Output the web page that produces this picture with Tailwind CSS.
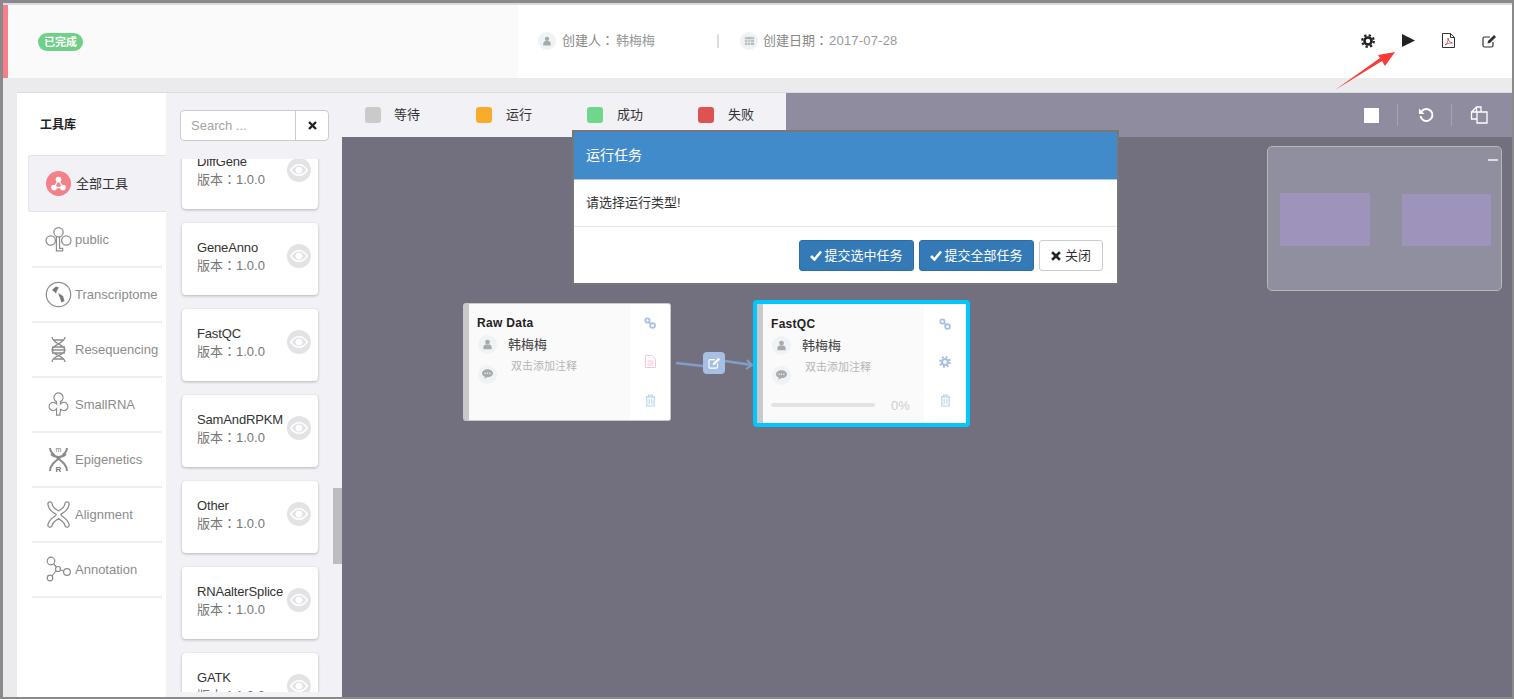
<!DOCTYPE html>
<html lang="en">
<head>
  <meta charset="UTF-8" />
  <title>工作流</title>
  <script src="https://cdn.jsdelivr.net/npm/@tailwindcss/browser@4"></script>
</head>
<body class="relative w-[1514px] h-[699px] overflow-hidden bg-[#8a8a8a] font-['Liberation_Sans','Noto_Sans_CJK_SC',sans-serif] text-[13px] text-[#333]">
  <!-- shared icons -->
  <svg class="hidden">
    <symbol id="user" viewBox="0 0 16 16"><circle cx="8" cy="4.500" r="3.500"/><path d="M2 15v-3c0-2.500 2-4 3.500-4h5c1.500 0 3.500 1.500 3.500 4v3z"/></symbol>
    <symbol id="eye" viewBox="0 0 24 16"><path d="M1 8c3-4.500 7-7 11-7s8 2.500 11 7c-3 4.500-7 7-11 7S4 12.500 1 8z" fill="none" stroke="#fff" stroke-width="2"/><circle cx="12" cy="8" r="4.500" fill="#fff"/></symbol>
    <symbol id="link" viewBox="0 0 14 14" fill="none" stroke-width="2"><circle cx="4" cy="4" r="2.500"/><circle cx="10" cy="10" r="2.800"/><path d="M6 6l2 2"/></symbol>
    <symbol id="trash" viewBox="0 0 12 14" fill="none" stroke-width="1.200"><path d="M1 3h10M4 3V1h4v2M2 3v10h8V3M4.500 5v6M7.500 5v6"/></symbol>
    <symbol id="comment" viewBox="0 0 14 12"><path d="M7 0c3.800 0 7 2.200 7 5s-3.200 5-7 5l-1 0-3 2 .6-2.600C1.400 8.500 0 6.900 0 5c0-2.800 3.200-5 7-5z"/><circle cx="4" cy="5" r="1" fill="#eef3f6"/><circle cx="7" cy="5" r="1" fill="#eef3f6"/><circle cx="10" cy="5" r="1" fill="#eef3f6"/></symbol>
    <symbol id="gear" viewBox="0 0 14 14" fill="none"><circle cx="7" cy="7" r="3.500" stroke-width="2.600"/><circle cx="7" cy="7" r="5.800" stroke-width="2.200" stroke-dasharray="2.300 2.250"/></symbol>
    <symbol id="clover" viewBox="0 0 26 26" fill="none" stroke="#8c8c8c" stroke-width="1.200"><path d="M11 10a4.800 4.800 0 1 1 4 0v2.500a4.300 4.300 0 1 1 0 5M11 10v2.500a4.300 4.300 0 1 0 0 5V24h3.500v-3M15 17.500V21"/></symbol>
  </svg>

  <div class="flex flex-col h-full pl-[3px] pr-[2px] pt-[3px] pb-[2px]">
    <div class="h-[2px] bg-[#d8dbe2]"></div>

    <!-- top header -->
    <header class="flex h-[73px] shrink-0 bg-white">
      <div class="w-[515px] flex items-center bg-[#fafafa] border-l-[5px] border-[#f67f89]">
        <span class="ml-[30px] mt-[1px] w-[45px] h-[18px] rounded-full bg-[#6fd088] text-white text-[11px] font-bold leading-[18px] text-center">已完成</span>
      </div>
      <div class="flex items-center pl-[20px] -mt-[2px] flex-1">
        <span class="w-[18px] h-[18px] rounded-full bg-[#eef3f6] flex items-center justify-center"><svg class="w-[10px] h-[10px] fill-[#aaa]"><use href="#user"/></svg></span>
        <span class="ml-[6px] text-[#888] w-[54px] font-['Liberation_Sans','Noto_Sans_CJK_TC',sans-serif]">创建人：</span>
        <span class="text-[#999]">韩梅梅</span>
        <span class="ml-[62px] w-[2px] h-[14px] bg-[#ddd]"></span>
        <span class="ml-[21px] w-[18px] h-[18px] rounded-full bg-[#eef3f6] flex items-center justify-center">
          <svg class="w-[11px] h-[11px]" viewBox="0 0 12 12"><path d="M1 2h10v9H1z" fill="#bbb"/><path d="M1 5h10M4 5v6M7 5v6M1 8h10M3 0v3M9 0v3" stroke="#eef3f6" stroke-width=".8"/></svg>
        </span>
        <span class="ml-[5px] text-[#888] w-[66px] font-['Liberation_Sans','Noto_Sans_CJK_TC',sans-serif]">创建日期：</span>
        <span class="text-[#999] tracking-[.2px]">2017-07-28</span>
        <div class="ml-auto flex items-center mr-[15px] gap-[27px]">
          <svg class="w-[14px] h-[14px] stroke-[#222]"><use href="#gear"/></svg>
          <svg class="w-[13px] h-[13px]" viewBox="0 0 13 13"><path d="M0 0l13 6.500L0 13z" fill="#222"/></svg>
          <svg class="w-[13px] h-[15px]" viewBox="0 0 13 15" fill="none" stroke="#333"><path d="M.5.500h8l4 4v10H.500zM8.500.500v4h4"/><path d="M3 12c2-1 3.500-4 3-7 .5 3 2 4.500 4.500 5-2.500-.3-5 .5-7.500 2z" stroke="#a33" stroke-width=".7"/></svg>
          <svg class="w-[15px] h-[14px]" viewBox="0 0 15 14" fill="none" stroke="#333" stroke-width="1.200"><path d="M11 8v3.500a1.500 1.500 0 0 1-1.500 1.500h-7A1.500 1.500 0 0 1 1 11.500v-7A1.500 1.500 0 0 1 2.500 3H8"/><path d="M5.500 9.500l.5-2.500L12 1l2 2-6 6z" fill="#333" stroke="none"/></svg>
        </div>
      </div>
    </header>

    <div class="h-[14px] shrink-0 bg-[#ebebed]"></div>

    <!-- main area -->
    <div class="flex flex-1 min-h-0 bg-[#ebebed] pl-[14px]">
      <!-- sidebar -->
      <aside class="w-[149px] shrink-0 bg-white border-t border-[#dcdce0]">
        <div class="h-[62px] pl-[23px] pt-[23px] font-bold text-[12px] text-[#222]">工具库</div>
        <div class="ml-[11px] h-[57px] flex items-center pl-[17px] gap-[5px] bg-[#f1f1f6] border border-r-0 border-[#e3e3e8] rounded-l-[3px]">
          <span class="w-[25px] h-[25px] rounded-full bg-[#f4808a] flex items-center justify-center">
            <svg class="w-[15px] h-[15px]" viewBox="0 0 15 15" fill="none" stroke="#fff" stroke-width="1.300"><path d="M7.500 4L3 11.500h9z"/><circle cx="7.500" cy="3.500" r="2.200" fill="#fff"/><circle cx="3" cy="11.500" r="2.200" fill="#fff"/><circle cx="12" cy="11.500" r="2.200" fill="#fff"/></svg>
          </span>
          <span class="text-[#333]">全部工具</span>
        </div>
        <ul class="mt-[1px] ml-[15px] mr-[4px] text-[#8c8c8c] text-[13px]">
          <li class="h-[55px] flex items-center gap-[3px] pl-[13px] border-b-2 border-[#efeff2]">
            <svg class="w-[27px] h-[27px]" viewBox="0 0 26 26" fill="none" stroke="#8c8c8c" stroke-width="1.200"><circle cx="13" cy="6" r="4.500"/><circle cx="5.500" cy="14" r="4.500"/><circle cx="20.500" cy="14" r="4.500"/><path d="M11 10.500V24h6v-2.500h-3V10.500"/></svg><span>public</span>
          </li>
          <li class="h-[55px] flex items-center gap-[3px] pl-[13px] border-b-2 border-[#efeff2]">
            <svg class="w-[27px] h-[27px]" viewBox="0 0 27 27"><circle cx="13.500" cy="13.500" r="12.200" fill="none" stroke="#8c8c8c" stroke-width="1.200"/><path d="M7 9l4-3.500 3 1-2 3-1 3-2-2zM13 12l5 3 1.500 5-3 1.500-1.500-4.500z" fill="#777"/></svg><span>Transcriptome</span>
          </li>
          <li class="h-[55px] flex items-center gap-[3px] pl-[13px] border-b-2 border-[#efeff2]">
            <svg class="w-[27px] h-[27px]" viewBox="0 0 27 27" fill="none" stroke="#8c8c8c" stroke-width="1.300"><path d="M7 1c0 6 13 8 13 13 0 5-13 6-13 12M20 1c0 6-13 8-13 13 0 5 13 6 13 12M8 4h11M7 11h13M7 14h13M7 17h13M8 23h11"/></svg><span>Resequencing</span>
          </li>
          <li class="h-[55px] flex items-center gap-[3px] pl-[13px] border-b-2 border-[#efeff2]">
            <svg class="w-[27px] h-[25px]"><use href="#clover"/></svg><span>SmallRNA</span>
          </li>
          <li class="h-[55px] flex items-center gap-[3px] pl-[13px] border-b-2 border-[#efeff2]">
            <svg class="w-[27px] h-[27px]" viewBox="0 0 27 27" fill="none" stroke="#8c8c8c" stroke-width="2"><path d="M5 2c0 9 17 12 17 23M22 2C22 11 5 14 5 25M6 8c4 4 11 4 15 0"/><text x="13.500" y="6" font-size="7" text-anchor="middle" fill="#777" stroke="none">m</text><text x="13.500" y="26" font-size="8" font-weight="bold" text-anchor="middle" fill="#777" stroke="none">R</text></svg><span>Epigenetics</span>
          </li>
          <li class="h-[55px] flex items-center gap-[3px] pl-[13px] border-b-2 border-[#efeff2]">
            <svg class="w-[27px] h-[27px]" viewBox="0 0 27 27" fill="none" stroke-linecap="round"><path d="M5 3c1 8 8.500 7 8.500 10.500S6 18 5 24M22 3c-1 8-8.500 7-8.500 10.500S21 18 22 24" stroke="#8c8c8c" stroke-width="5.500"/><path d="M5 3c1 8 8.500 7 8.500 10.500S6 18 5 24M22 3c-1 8-8.500 7-8.500 10.500S21 18 22 24" stroke="#fff" stroke-width="3"/></svg><span>Alignment</span>
          </li>
          <li class="h-[55px] flex items-center gap-[3px] pl-[13px] border-b-2 border-[#efeff2]">
            <svg class="w-[27px] h-[27px]" viewBox="0 0 27 27" fill="none" stroke="#8c8c8c" stroke-width="1.200"><circle cx="6" cy="5" r="3.800"/><circle cx="13" cy="13" r="2.500"/><circle cx="22" cy="16" r="3.400"/><circle cx="5" cy="22" r="2.800"/><path d="M8.500 8l3 3M15.500 14l3.300 1M11 15l-4 5"/></svg><span>Annotation</span>
          </li>
        </ul>
      </aside>

      <!-- tool list -->
      <section class="relative w-[176px] shrink-0 flex flex-col bg-[#f1f1f6] pl-[14px] border-t border-[#dcdce0]">
        <div class="flex w-[149px] h-[31px] mt-[17px] shrink-0 bg-white border border-[#ccc] rounded-[4px] leading-[29px]">
          <div class="flex-1 pl-[10px] text-[#a5a5a5] border-r border-[#ccc]">Search ...</div>
          <div class="w-[32px] flex items-center justify-center">
            <svg class="w-[9px] h-[9px]" viewBox="0 0 9 9"><path d="M1 1l7 7M8 1L1 8" stroke="#222" stroke-width="2.400"/></svg>
          </div>
        </div>
        <div class="mt-[18px] h-[533px] overflow-hidden">
          <div class="-mt-[22.5px] ml-[2px] w-[136px] flex flex-col gap-[14px]">
            <div class="relative h-[72px] shrink-0 bg-white rounded-[4px] shadow-[0_1px_3px_rgba(0,0,0,.25)] pl-[15px] pt-[16px] leading-[18px]"><div class="text-[#333] tracking-[-.15px]">DiffGene</div><div class="text-[#777] font-['Liberation_Sans','Noto_Sans_CJK_TC',sans-serif]">版本：1.0.0</div><span class="absolute left-[105px] top-[21px] w-[24px] h-[24px] rounded-full bg-[#e3e3e5] flex items-center justify-center"><svg class="w-[18px] h-[12px]"><use href="#eye"/></svg></span></div>
            <div class="relative h-[72px] shrink-0 bg-white rounded-[4px] shadow-[0_1px_3px_rgba(0,0,0,.25)] pl-[15px] pt-[16px] leading-[18px]"><div class="text-[#333] tracking-[-.15px]">GeneAnno</div><div class="text-[#777] font-['Liberation_Sans','Noto_Sans_CJK_TC',sans-serif]">版本：1.0.0</div><span class="absolute left-[105px] top-[21px] w-[24px] h-[24px] rounded-full bg-[#e3e3e5] flex items-center justify-center"><svg class="w-[18px] h-[12px]"><use href="#eye"/></svg></span></div>
            <div class="relative h-[72px] shrink-0 bg-white rounded-[4px] shadow-[0_1px_3px_rgba(0,0,0,.25)] pl-[15px] pt-[16px] leading-[18px]"><div class="text-[#333] tracking-[-.15px]">FastQC</div><div class="text-[#777] font-['Liberation_Sans','Noto_Sans_CJK_TC',sans-serif]">版本：1.0.0</div><span class="absolute left-[105px] top-[21px] w-[24px] h-[24px] rounded-full bg-[#e3e3e5] flex items-center justify-center"><svg class="w-[18px] h-[12px]"><use href="#eye"/></svg></span></div>
            <div class="relative h-[72px] shrink-0 bg-white rounded-[4px] shadow-[0_1px_3px_rgba(0,0,0,.25)] pl-[15px] pt-[16px] leading-[18px]"><div class="text-[#333] tracking-[-.15px]">SamAndRPKM</div><div class="text-[#777] font-['Liberation_Sans','Noto_Sans_CJK_TC',sans-serif]">版本：1.0.0</div><span class="absolute left-[105px] top-[21px] w-[24px] h-[24px] rounded-full bg-[#e3e3e5] flex items-center justify-center"><svg class="w-[18px] h-[12px]"><use href="#eye"/></svg></span></div>
            <div class="relative h-[72px] shrink-0 bg-white rounded-[4px] shadow-[0_1px_3px_rgba(0,0,0,.25)] pl-[15px] pt-[16px] leading-[18px]"><div class="text-[#333] tracking-[-.15px]">Other</div><div class="text-[#777] font-['Liberation_Sans','Noto_Sans_CJK_TC',sans-serif]">版本：1.0.0</div><span class="absolute left-[105px] top-[21px] w-[24px] h-[24px] rounded-full bg-[#e3e3e5] flex items-center justify-center"><svg class="w-[18px] h-[12px]"><use href="#eye"/></svg></span></div>
            <div class="relative h-[72px] shrink-0 bg-white rounded-[4px] shadow-[0_1px_3px_rgba(0,0,0,.25)] pl-[15px] pt-[16px] leading-[18px]"><div class="text-[#333] tracking-[-.15px]">RNAalterSplice</div><div class="text-[#777] font-['Liberation_Sans','Noto_Sans_CJK_TC',sans-serif]">版本：1.0.0</div><span class="absolute left-[105px] top-[21px] w-[24px] h-[24px] rounded-full bg-[#e3e3e5] flex items-center justify-center"><svg class="w-[18px] h-[12px]"><use href="#eye"/></svg></span></div>
            <div class="relative h-[72px] shrink-0 bg-white rounded-[4px] shadow-[0_1px_3px_rgba(0,0,0,.25)] pl-[15px] pt-[16px] leading-[18px]"><div class="text-[#333] tracking-[-.15px]">GATK</div><div class="text-[#777] font-['Liberation_Sans','Noto_Sans_CJK_TC',sans-serif]">版本：1.0.0</div><span class="absolute left-[105px] top-[21px] w-[24px] h-[24px] rounded-full bg-[#e3e3e5] flex items-center justify-center"><svg class="w-[18px] h-[12px]"><use href="#eye"/></svg></span></div>
          </div>
        </div>
        <!-- scrollbar thumb -->
        <div class="absolute right-0 top-[395px] w-[9px] h-[76px] bg-[#bcbcc0]"></div>
      </section>

      <!-- work area -->
      <main class="flex-1 flex flex-col min-w-0 border-t border-[#dcdce0]">
        <div class="flex h-[44px] shrink-0">
          <div class="w-[444px] flex items-center pl-[23px] bg-[#f1f1f6]">
            <div class="w-[111px] shrink-0 flex items-center gap-[13px]"><span class="w-[16px] h-[16px] rounded-[3px] bg-[#cacaca]"></span><span>等待</span></div>
            <div class="w-[111px] shrink-0 flex items-center gap-[14px]"><span class="w-[16px] h-[16px] rounded-[3px] bg-[#f8ac2c]"></span><span>运行</span></div>
            <div class="w-[111px] shrink-0 flex items-center gap-[14px]"><span class="w-[16px] h-[16px] rounded-[3px] bg-[#6fd68a]"></span><span>成功</span></div>
            <div class="w-[88px] shrink-0 flex items-center gap-[14px]"><span class="w-[16px] h-[16px] rounded-[3px] bg-[#dd5350]"></span><span>失败</span></div>
          </div>
          <div class="flex-1 flex items-center justify-end pr-[24px] bg-[#8e8c9e]">
            <span class="w-[15px] h-[15px] bg-white"></span>
            <span class="ml-[18px] w-[1px] h-[22px] bg-[#a5a4b3]"></span>
            <svg class="ml-[20px] w-[16px] h-[16px]" viewBox="0 0 16 16" fill="none" stroke="#fff" stroke-width="2"><path d="M3.500 4.500A6 6 0 1 1 2.500 9"/><path d="M1 1.500v5.500h5.500z" fill="#fff" stroke="none"/></svg>
            <span class="ml-[17px] w-[1px] h-[22px] bg-[#a5a4b3]"></span>
            <svg class="ml-[18px] w-[18px] h-[18px]" viewBox="0 0 18 18" fill="none" stroke="#fff" stroke-width="1.300"><path d="M7 13H1.500V6L6.500 1H11v5"/><path d="M1.500 6h5V1"/><path d="M7 6h10v11H7z"/></svg>
          </div>
        </div>

        <!-- canvas: nodes sit at free positions -->
        <div class="relative flex-1 bg-[#72707f]">
          <!-- edge -->
          <svg class="absolute left-[330px] top-[210px] w-[90px] h-[30px]" viewBox="0 0 90 30" fill="none" stroke="#7f9ecb" stroke-width="2.500"><path d="M4 16l27 3M53 14l27 4"/><path d="M75 13l5 5-6 4" stroke-width="2"/></svg>
          <span class="absolute left-[361px] top-[215px] w-[22px] h-[22px] rounded-[4px] bg-[#a7bfe2] flex items-center justify-center">
            <svg class="w-[13px] h-[12px]" viewBox="0 0 15 14" fill="none" stroke="#fff" stroke-width="1.300"><path d="M11 8v3.500a1.500 1.500 0 0 1-1.500 1.500h-7A1.500 1.500 0 0 1 1 11.500v-7A1.500 1.500 0 0 1 2.500 3H8"/><path d="M5.500 9.500l.5-2.500L12 1l2 2-6 6z" fill="#fff" stroke="none"/></svg>
          </span>

          <!-- Raw Data -->
          <div class="absolute left-[121px] top-[166px] w-[208px] h-[118px] flex rounded-[3px] overflow-hidden border border-l-[6px] border-[#c9c9c9] bg-[#fafafa]">
            <div class="flex-1 pl-[8px] pt-[11px]">
              <div class="font-bold text-[12px] leading-[16px] text-[#222] tracking-[.3px]">Raw Data</div>
              <div class="flex items-center mt-[4px]">
                <span class="ml-[1px] w-[19px] h-[19px] rounded-full bg-[#eef3f6] flex items-center justify-center"><svg class="w-[11px] h-[11px] fill-[#aaa]"><use href="#user"/></svg></span>
                <span class="ml-[11px] text-[#444]">韩梅梅</span>
              </div>
              <div class="flex mt-[3px]">
                <span class="ml-[1px] mt-[7px] w-[19px] h-[19px] rounded-full bg-[#eef3f6] flex items-center justify-center"><svg class="w-[11px] h-[10px] fill-[#aaa]"><use href="#comment"/></svg></span>
                <span class="ml-[14px] text-[11px] text-[#b5b5b5]">双击添加注释</span>
              </div>
            </div>
            <div class="w-[40px] bg-white flex flex-col items-center pt-[13px] gap-[26px]">
              <svg class="w-[12px] h-[12px] stroke-[#a7bfe2]"><use href="#link"/></svg>
              <svg class="w-[11px] h-[13px]" viewBox="0 0 11 13" fill="none" stroke="#f8c8d5"><path d="M.5.500h6.500l3.500 3.500v8.500H.500zM2.500 6h6M2.500 8h6M2.500 10h6"/></svg>
              <svg class="w-[11px] h-[13px] stroke-[#b5d3e8]"><use href="#trash"/></svg>
            </div>
          </div>

          <!-- FastQC -->
          <div class="absolute left-[411px] top-[163px] w-[217px] h-[127px] flex rounded-[4px] overflow-hidden border-[4px] border-[#00c8ff] bg-[#fafafa]">
            <div class="flex-1 flex flex-col border-l-[6px] border-[#c9c9c9] pl-[8px] pt-[12px]">
              <div class="font-bold text-[12px] leading-[16px] text-[#222] tracking-[.3px]">FastQC</div>
              <div class="flex items-center mt-[4px]">
                <span class="ml-[1px] w-[19px] h-[19px] rounded-full bg-[#eef3f6] flex items-center justify-center"><svg class="w-[11px] h-[11px] fill-[#aaa]"><use href="#user"/></svg></span>
                <span class="ml-[11px] text-[#444]">韩梅梅</span>
              </div>
              <div class="flex mt-[3px]">
                <span class="ml-[1px] mt-[7px] w-[19px] h-[19px] rounded-full bg-[#eef3f6] flex items-center justify-center"><svg class="w-[11px] h-[10px] fill-[#aaa]"><use href="#comment"/></svg></span>
                <span class="ml-[14px] text-[11px] text-[#b5b5b5]">双击添加注释</span>
              </div>
              <div class="flex items-center mt-[11px]">
                <span class="w-[104px] h-[4px] rounded-full bg-[#e3e3e3]"></span>
                <span class="ml-[16px] text-[#ccc]">0%</span>
              </div>
            </div>
            <div class="w-[42px] bg-white flex flex-col items-center pt-[14px] gap-[26px]">
              <svg class="w-[12px] h-[12px] stroke-[#a7bfe2]"><use href="#link"/></svg>
              <svg class="w-[12px] h-[12px] stroke-[#a7bfe2]"><use href="#gear"/></svg>
              <svg class="w-[11px] h-[13px] stroke-[#b5d3e8]"><use href="#trash"/></svg>
            </div>
          </div>

          <!-- minimap -->
          <div class="absolute right-[10px] top-[9px] w-[235px] h-[145px] rounded-[5px] border border-[#b8b8ae] bg-[#908f9f]">
            <span class="absolute right-[3px] top-[12px] w-[10px] h-[2px] bg-[#ddd]"></span>
            <span class="absolute left-[12px] top-[46px] w-[90px] h-[53px] bg-[#9d93bb]"></span>
            <span class="absolute left-[134px] top-[47px] w-[89px] h-[52px] bg-[#9d93bb]"></span>
          </div>
        </div>
      </main>
    </div>
  </div>

  <!-- modal -->
  <div class="absolute left-[572px] top-[130px] w-[547px] h-[155px] flex flex-col border-2 border-[#777] bg-white">
    <div class="h-[48px] shrink-0 bg-[#428bca] border-b border-[#a9c9e4] pl-[12px] text-white text-[14px] leading-[46px]">运行任务</div>
    <div class="h-[47px] shrink-0 border-b border-[#e8e8e8] pl-[12px] text-[13px] leading-[46px] text-[#333]">请选择运行类型!</div>
    <div class="flex justify-end items-start gap-[5px] pt-[13px] pr-[14px]">
      <span class="flex items-center justify-center gap-[2px] w-[115px] h-[31px] rounded-[3px] bg-[#337ab7] border border-[#2e6da4] text-white">
        <svg class="w-[12px] h-[11px]" viewBox="0 0 12 11" fill="none" stroke="#fff" stroke-width="2.500"><path d="M1 6l3.500 3.500L11 1.500"/></svg>提交选中任务
      </span>
      <span class="flex items-center justify-center gap-[2px] w-[115px] h-[31px] rounded-[3px] bg-[#337ab7] border border-[#2e6da4] text-white">
        <svg class="w-[12px] h-[11px]" viewBox="0 0 12 11" fill="none" stroke="#fff" stroke-width="2.500"><path d="M1 6l3.500 3.500L11 1.500"/></svg>提交全部任务
      </span>
      <span class="flex items-center justify-center gap-[4px] w-[64px] h-[31px] rounded-[3px] bg-white border border-[#ccc] text-[#333]">
        <svg class="w-[10px] h-[10px]" viewBox="0 0 9 9"><path d="M1 1l7 7M8 1L1 8" stroke="#222" stroke-width="2.400"/></svg>关闭
      </span>
    </div>
  </div>

  <!-- red annotation arrow -->
  <svg class="absolute left-[1330px] top-[45px] w-[70px] h-[50px]" viewBox="1330 45 70 50"><polygon points="1335,90 1382,61 1385,66 1395,52 1378,55 1380,58" fill="#f93a3a"/></svg>
</body>
</html>
